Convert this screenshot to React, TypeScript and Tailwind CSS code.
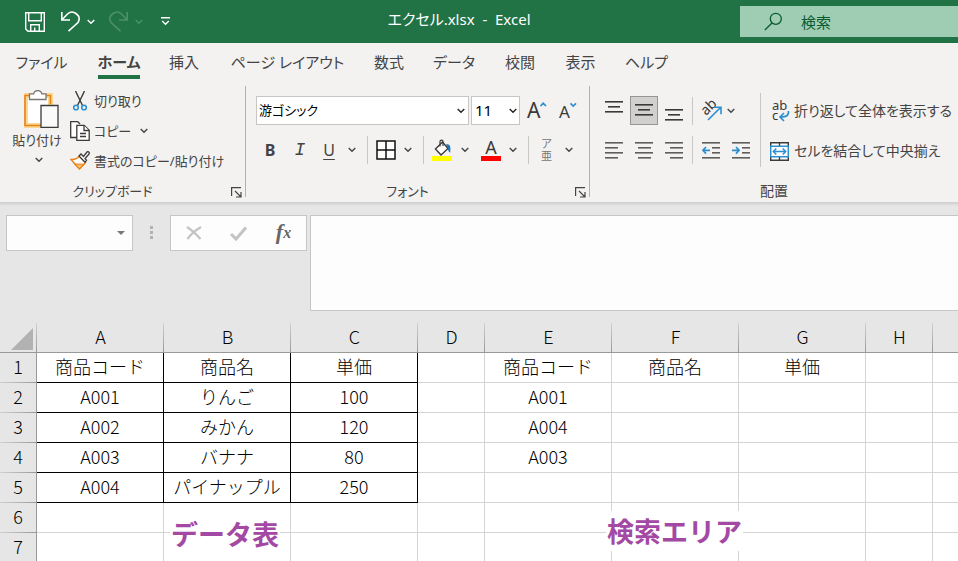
import React, { useState } from 'react';
import clsx from 'clsx';

const TABS = [
  { label: 'ファイル', width: 'w-[77px]' },
  { label: 'ホーム', width: 'w-[78px]' },
  { label: '挿入', width: 'w-[52px]' },
  { label: 'ページ レイアウト', width: 'w-[155px]' },
  { label: '数式', width: 'w-[48px]' },
  { label: 'データ', width: 'w-[82px]' },
  { label: '校閲', width: 'w-[50px]' },
  { label: '表示', width: 'w-[71px]' },
  { label: 'ヘルプ', width: 'w-[61px]' },
];

const COLUMNS = [
  { name: 'A', width: 'w-[127px]' },
  { name: 'B', width: 'w-[127px]' },
  { name: 'C', width: 'w-[127px]' },
  { name: 'D', width: 'w-[67px]' },
  { name: 'E', width: 'w-[127px]' },
  { name: 'F', width: 'w-[127px]' },
  { name: 'G', width: 'w-[127px]' },
  { name: 'H', width: 'w-[67px]' },
  { name: '', width: '' },
];

const ROWS = [
  ['商品コード', '商品名', '単価', '', '商品コード', '商品名', '単価', '', ''],
  ['A001', 'りんご', '100', '', 'A001', '', '', '', ''],
  ['A002', 'みかん', '120', '', 'A004', '', '', '', ''],
  ['A003', 'バナナ', '80', '', 'A003', '', '', '', ''],
  ['A004', 'パイナップル', '250', '', '', '', '', '', ''],
  ['', '', '', '', '', '', '', '', ''],
  ['', '', '', '', '', '', '', '', ''],
];

const Chevron: React.FC<{ className?: string }> = ({ className }) => (
  <svg width="8" height="6" viewBox="0 0 8 6" fill="none" stroke="currentColor" strokeWidth="1.4" className={className}>
    <path d="M.7 1 4 4.3 7.3 1" />
  </svg>
);

const Divider: React.FC = () => <div className="h-7 w-px shrink-0 bg-[#c8c6c4]" />;

const IconButton: React.FC<{
  label: string;
  className?: string;
  children: React.ReactNode;
}> = ({ label, className, children }) => (
  <button aria-label={label} title={label} className={clsx('flex shrink-0 items-center justify-center', className)}>
    {children}
  </button>
);

const Launcher: React.FC<{ label: string }> = ({ label }) => (
  <IconButton label={label} className="absolute right-[3px] top-[11px] h-[11px] w-[11px]">
    <svg width="11" height="11" viewBox="0 0 11 11" fill="none" stroke="#444" strokeWidth="1.2">
      <path d="M.6 9V.6H10M4 4l5.5 5.5M10 5v5H5" />
    </svg>
  </IconButton>
);

// lines are [x, y, width] on an 18px wide grid
const Lines: React.FC<{ lines: number[][]; height: number; color?: string; children?: React.ReactNode }> = ({
  lines,
  height,
  color = '#3b3a39',
  children,
}) => (
  <svg width="18" height={height} viewBox={`0 0 18 ${height}`} fill={color}>
    {lines.map(([x, y, w]) => (
      <rect key={`${x}-${y}`} x={x} y={y} width={w} height="1.6" />
    ))}
    {children}
  </svg>
);

const VERTICAL_LINES = [[0, 0, 18], [3, 5, 12], [0, 10, 18]];

const TitleBar: React.FC = () => (
  <header className="relative flex h-[43px] shrink-0 items-center justify-between bg-[#217346] text-white">
    <div className="flex items-center pl-[25px]">
      <IconButton label="上書き保存">
        <svg width="20" height="20" viewBox="0 0 20 20" fill="none" stroke="currentColor" strokeWidth="1.4">
          <path d="M.7.7h18.6v18.6H3L.7 17zM3.7.7v8h12.6v-8M5.7 19v-6.3h8.6V19M9.7 15.5V19" />
        </svg>
      </IconButton>
      <IconButton label="元に戻す" className="ml-4">
        <svg width="19" height="21" viewBox="0 0 19 21" fill="none" stroke="currentColor" strokeWidth="1.6">
          <path d="M.8 1v8H9M1.2 8.5 6.5 3C12-2 21 4.5 17 11.5L7.5 20.2" />
        </svg>
      </IconButton>
      <IconButton label="元に戻す履歴" className="ml-[7px]">
        <Chevron />
      </IconButton>
      <IconButton label="やり直し" className="ml-[14px] text-[#4d9069]">
        <svg width="19" height="21" viewBox="0 0 19 21" fill="none" stroke="currentColor" strokeWidth="1.6">
          <path d="M18.2 1v8H10M17.8 8.5 12.5 3C7-2-2 4.5 2 11.5l9.5 8.7" />
        </svg>
      </IconButton>
      <IconButton label="やり直し履歴" className="ml-[7px] text-[#4d9069]">
        <Chevron />
      </IconButton>
      <IconButton label="クイック アクセス ツール バーのユーザー設定" className="ml-[18px]">
        <svg width="9" height="9" viewBox="0 0 9 9" fill="none" stroke="currentColor" strokeWidth="1.4">
          <path d="M0 .8h9M1.2 4 4.5 7.3 7.8 4" />
        </svg>
      </IconButton>
    </div>
    <h1 className="absolute inset-x-0 top-[7px] mx-auto w-fit -translate-x-5 whitespace-pre text-[15px] leading-6 [font-feature-settings:'palt']">
      エクセル.xlsx  -  Excel
    </h1>
    <label className="flex h-[31px] w-[218px] items-center bg-[#9fcdb3] pl-6 text-[#0b5a2e]">
      <svg width="19" height="19" viewBox="0 0 19 19" fill="none" stroke="currentColor" strokeWidth="1.3" className="shrink-0">
        <circle cx="11.8" cy="6.8" r="5.5" />
        <path d="M8 11 .8 18" />
      </svg>
      <input
        type="text"
        aria-label="検索"
        placeholder="検索"
        className="ml-[18px] w-full min-w-0 bg-transparent text-[15px] leading-6 outline-none placeholder:text-[#0b5a2e]"
      />
    </label>
  </header>
);

const ClipboardGroup: React.FC = () => (
  <section className="w-[245px] shrink-0 text-[13px]">
    <div className="flex h-[90px]">
      <button className="flex w-[70px] shrink-0 flex-col items-center pl-1 pt-1">
        <svg width="35" height="38" viewBox="0 0 35 38" className="ml-2">
          <path d="M1.5 5.5h25v30h-25z" fill="#fff" stroke="#f8d98f" strokeWidth="5" />
          <path d="M10 5.5H1v30h16M18 5.5h8.5V14" fill="none" stroke="#e8821e" strokeWidth="1.6" />
          <path d="M5.5 9.5V3.8h4.2C10.5-.5 17-.5 17.8 3.8H22v5.7z" fill="#fff" stroke="#797774" strokeWidth="1.3" />
          <path d="M17 15.5h17v21.8H17z" fill="#fafafa" stroke="#3b3a39" strokeWidth="1.3" />
        </svg>
        <span className="mt-0.5 whitespace-nowrap leading-5">貼り付け</span>
        <Chevron className="ml-1 mt-[7px]" />
      </button>
      <div className="flex flex-col items-start whitespace-nowrap">
        <button className="flex h-[30px] items-center">
          <svg width="20" height="20" viewBox="0 0 20 20" fill="none" strokeWidth="1.4">
            <path d="M5.5 0 12.5 14.5M14.5 0 7.5 14.5" stroke="#3b3a39" />
            <circle cx="6" cy="16.5" r="2.3" stroke="#2e8fd0" strokeWidth="1.6" />
            <circle cx="14" cy="16.5" r="2.3" stroke="#2e8fd0" strokeWidth="1.6" />
          </svg>
          <span className="ml-1">切り取り</span>
        </button>
        <div className="flex h-[30px] items-center">
          <button className="flex items-center">
            <svg width="20" height="20" viewBox="0 0 20 20" fill="#fff" stroke="#3b3a39" strokeWidth="1.3">
              <path d="M6.5 16.5H.7V.7h7L10 3" />
              <path d="M6.8 4.3h7.4l5 5v10H6.8z" />
              <path d="M14 4.5v5h5M10 12.5h6M10 15.5h6" />
            </svg>
            <span className="ml-1">コピー</span>
          </button>
          <IconButton label="コピーのオプション" className="ml-[9px]">
            <Chevron />
          </IconButton>
        </div>
        <button className="flex h-[30px] items-center">
          <svg width="20" height="20" viewBox="0 0 20 20">
            <path d="M1 8.5 9.5 18l6-6.5L9.5 5C7 8 4 8.8 1 8.5z" fill="#fff" stroke="#e8821e" strokeWidth="1.4" />
            <path d="m4.5 13 9.5.2L9.500 18z" fill="#f8c46a" stroke="#e8821e" strokeWidth="1.2" />
            <path d="m9 5 2-2 2.5 2.5L17 1c1-1 3 .5 2 2l-4 4.5 1.5 1.7-1.5 2z" fill="#fff" stroke="#3b3a39" strokeWidth="1.3" />
          </svg>
          <span className="ml-1">書式のコピー/貼り付け</span>
        </button>
      </div>
    </div>
    <div className="relative flex h-[26px] justify-center pr-5 pt-[5px]">
      <span className="leading-5">クリップボード</span>
      <Launcher label="クリップボードの表示" />
    </div>
  </section>
);

const FontGroup: React.FC = () => {
  const [font, setFont] = useState('游ゴシック');
  const [size, setSize] = useState('11');

  return (
    <section className="w-[343px] shrink-0">
      <div className="flex h-[90px] flex-col gap-[11px] pl-[10px] pt-[10px]">
        <div className="flex h-[29px] items-center">
          <div className="relative h-full w-[213px] shrink-0">
            <select
              aria-label="フォント"
              value={font}
              onChange={(e) => setFont(e.target.value)}
              className="h-full w-full appearance-none border border-[#c8c6c4] bg-white pl-0.5 text-[13px] text-black"
            >
              <option>游ゴシック</option>
            </select>
            <Chevron className="pointer-events-none absolute right-1 top-3 text-[#252423]" />
          </div>
          <div className="relative ml-0.5 h-full w-[49px] shrink-0">
            <select
              aria-label="フォント サイズ"
              value={size}
              onChange={(e) => setSize(e.target.value)}
              className="h-full w-full appearance-none border border-[#c8c6c4] bg-white pl-[3px] text-[15px] text-black"
            >
              <option>11</option>
            </select>
            <Chevron className="pointer-events-none absolute right-[3px] top-3 text-[#252423]" />
          </div>
          <IconButton label="フォント サイズの拡大" className="ml-[7px]">
            <svg width="20" height="20" viewBox="0 0 20 20" className="overflow-visible">
              <text x="0" y="17" fontSize="21" fill="#3b3a39" fontFamily="Noto Sans">
                A
              </text>
              <path d="m13.5 5 2.7-2.700L19 5" fill="none" stroke="#2e8fd0" strokeWidth="1.7" />
            </svg>
          </IconButton>
          <IconButton label="フォント サイズの縮小" className="ml-3">
            <svg width="18" height="20" viewBox="0 0 18 20" className="overflow-visible">
              <text x="0" y="17" fontSize="17" fill="#3b3a39" fontFamily="Noto Sans">
                A
              </text>
              <path d="m11.5 2.3 2.7 2.700L17 2.300" fill="none" stroke="#2e8fd0" strokeWidth="1.7" />
            </svg>
          </IconButton>
        </div>
        <div className="flex h-7 items-center">
          <IconButton label="太字" className="w-7 font-['Noto_Sans'] text-base font-bold">
            B
          </IconButton>
          <IconButton label="斜体" className="w-8 font-['Liberation_Mono'] text-lg italic">
            I
          </IconButton>
          <IconButton label="下線" className="w-[26px] font-['Noto_Sans'] text-base underline underline-offset-3">
            U
          </IconButton>
          <IconButton label="下線の種類" className="w-5">
            <Chevron />
          </IconButton>
          <div className="w-[5px]" />
          <Divider />
          <IconButton label="罫線" className="ml-2">
            <svg width="20" height="20" viewBox="0 0 20 20" fill="#fff" stroke="#111" strokeWidth="1.5">
              <path d="M1 1h18v18H1zM10 1v18M1 10h18" />
            </svg>
          </IconButton>
          <IconButton label="罫線の種類" className="w-6">
            <Chevron />
          </IconButton>
          <div className="w-[3px]" />
          <Divider />
          <IconButton label="塗りつぶしの色" className="ml-2">
            <svg width="20" height="22" viewBox="0 0 20 22" fill="none">
              <path d="m3.5 10 7-7 5.5 6.500-7 6.500z" fill="#fff" stroke="#3b3a39" strokeWidth="1.4" />
              <path d="M8 7.5V2.500c0-1.800 3-1.800 3 0V7" stroke="#3b3a39" strokeWidth="1.2" />
              <path d="M14 5.500c4-1 5 2 4.200 8-2.500-.500-1.500-4-4.200-8z" fill="#1e72b8" />
              <path d="M0 17h20v5H0z" fill="#ff0" />
            </svg>
          </IconButton>
          <IconButton label="塗りつぶしの色の選択" className="w-[25px]">
            <Chevron />
          </IconButton>
          <IconButton label="フォントの色" className="ml-1">
            <svg width="20" height="22" viewBox="0 0 20 22" className="overflow-visible">
              <text x="10" y="15" textAnchor="middle" fontSize="18" fill="#3b3a39" fontFamily="Noto Sans">
                A
              </text>
              <path d="M0 17h20v5H0z" fill="red" />
            </svg>
          </IconButton>
          <IconButton label="フォントの色の選択" className="w-6">
            <Chevron />
          </IconButton>
          <div className="w-[3px]" />
          <Divider />
          <IconButton label="ふりがなの表示" className="ml-3 flex-col text-[11px] leading-[12px] text-[#797774]">
            <span>ア</span>
            <span>亜</span>
          </IconButton>
          <IconButton label="ふりがなの設定" className="ml-1 w-[25px]">
            <Chevron />
          </IconButton>
        </div>
      </div>
      <div className="relative flex h-[26px] justify-center pr-5 pt-[5px] text-[13px]">
        <span className="leading-5">フォント</span>
        <Launcher label="フォントの設定" />
      </div>
    </section>
  );
};

const AlignmentGroup: React.FC = () => (
  <section className="min-w-0 flex-1">
    <div className="flex h-[90px] pl-[9px]">
      <div className="flex shrink-0 flex-col gap-[11px] pt-[10px]">
        <div className="flex h-[29px] items-center">
          <IconButton label="上揃え" className="h-full w-[30px] pb-2">
            <Lines lines={VERTICAL_LINES} height={12} />
          </IconButton>
          <IconButton label="上下中央揃え" className="mx-px h-full w-7 border border-[#979593] bg-[#d2d0ce] pb-0.5">
            <Lines lines={VERTICAL_LINES} height={12} />
          </IconButton>
          <IconButton label="下揃え" className="h-full w-[30px] pt-2">
            <Lines lines={VERTICAL_LINES} height={12} />
          </IconButton>
          <div className="w-[3px]" />
          <Divider />
          <IconButton label="方向" className="ml-2">
            <svg width="22" height="22" viewBox="0 0 22 22" fill="none" className="overflow-visible">
              <text x="5" y="16" transform="rotate(-45 5 16)" fontSize="14" fill="#3b3a39" fontFamily="Noto Sans">
                ab
              </text>
              <path d="M7 20 19.5 7.500M13 7.200h7v7" stroke="#2e8fd0" strokeWidth="1.6" />
            </svg>
          </IconButton>
          <IconButton label="方向の種類" className="w-4">
            <Chevron />
          </IconButton>
        </div>
        <div className="flex h-7 items-center">
          <IconButton label="左揃え" className="w-[30px]">
            <Lines lines={[[0, 0, 18], [0, 5, 13], [0, 10, 18], [0, 15, 13]]} height={17} color="#605e5c" />
          </IconButton>
          <IconButton label="中央揃え" className="w-[30px]">
            <Lines lines={[[0, 0, 18], [3, 5, 13], [0, 10, 18], [3, 15, 13]]} height={17} color="#605e5c" />
          </IconButton>
          <IconButton label="右揃え" className="w-[30px]">
            <Lines lines={[[0, 0, 18], [5, 5, 13], [0, 10, 18], [5, 15, 13]]} height={17} color="#605e5c" />
          </IconButton>
          <div className="w-[3px]" />
          <Divider />
          <IconButton label="インデントを減らす" className="ml-[3px] w-[30px]">
            <Lines lines={[[0, 0, 18], [10, 5, 8], [10, 10, 8], [0, 15, 18]]} height={17} color="#605e5c">
              <path d="M8 8.300H1M4 5 .9 8.300 4 11.600" fill="none" stroke="#2e8fd0" strokeWidth="1.7" />
            </Lines>
          </IconButton>
          <IconButton label="インデントを増やす" className="w-[30px]">
            <Lines lines={[[0, 0, 18], [10, 5, 8], [10, 10, 8], [0, 15, 18]]} height={17} color="#605e5c">
              <path d="M0 8.300h7M4 5l3.100 3.300L4 11.600" fill="none" stroke="#2e8fd0" strokeWidth="1.7" />
            </Lines>
          </IconButton>
        </div>
      </div>
      <div className="ml-[4px] mt-[7px] h-[74px] w-px shrink-0 bg-[#c8c6c4]" />
      <div className="flex flex-col gap-[10px] whitespace-nowrap pl-[9px] pt-[10px]">
        <button className="flex h-[30px] items-center">
          <svg width="20" height="22" viewBox="0 0 20 22" fill="none" className="overflow-visible">
            <text x="2" y="10" fontSize="13" fill="#3b3a39" fontFamily="Noto Sans">
              ab
            </text>
            <text x="2" y="20" fontSize="13" fill="#3b3a39" fontFamily="Noto Sans">
              c
            </text>
            <path d="M18.5 11c.500 4-1.500 6-8 6M14 13l-4 4 4 4" stroke="#2e8fd0" strokeWidth="1.7" />
          </svg>
          <span className="ml-1">折り返して全体を表示する</span>
        </button>
        <button className="flex h-[30px] items-center">
          <svg width="19" height="19" viewBox="0 0 19 19" fill="#fff">
            <path d="M.7.7h17.600v17.600H.7zM9.500.7v4M9.500 14.500v4" stroke="#3b3a39" strokeWidth="1.4" />
            <path d="M.7 4.300h17.600v10.400H.7z" stroke="#2e8fd0" strokeWidth="1.5" />
            <path d="M3.500 9.500h12M6.300 6.500l-3 3 3 3M12.700 6.500l3 3-3 3" fill="none" stroke="#2e8fd0" strokeWidth="1.5" />
          </svg>
          <span className="ml-[5px]">セルを結合して中央揃え</span>
        </button>
      </div>
    </div>
    <div className="flex h-[26px] justify-center pt-[5px]">
      <span className="leading-5">配置</span>
    </div>
  </section>
);

const Ribbon: React.FC = () => {
  const [active, setActive] = useState('ホーム');

  return (
    <div className="shrink-0 bg-[#f3f2f1] text-[#444] [font-feature-settings:'palt']">
      <nav className="flex h-[43px] pl-[3px]">
        {TABS.map((tab) => (
          <button
            key={tab.label}
            onClick={() => setActive(tab.label)}
            className={clsx('flex shrink-0 justify-center whitespace-nowrap pt-[7px] text-[15px] leading-6', tab.width)}
          >
            <span
              className={clsx(
                'h-[29px] border-b-4',
                active === tab.label ? 'border-[#217346] font-bold' : 'border-transparent'
              )}
            >
              {tab.label}
            </span>
          </button>
        ))}
      </nav>
      <div className="flex h-[116px] text-sm">
        <ClipboardGroup />
        <div className="h-[111px] w-px shrink-0 bg-[#b3b0ad]" />
        <FontGroup />
        <div className="h-[111px] w-px shrink-0 bg-[#b3b0ad]" />
        <AlignmentGroup />
      </div>
    </div>
  );
};

const FormulaBar: React.FC = () => (
  <div className="flex shrink-0 items-start bg-[#e6e6e6] pb-3 pl-[6px] pt-[9px]">
    <div className="flex h-9 w-[127px] shrink-0 items-center border border-[#c6c6c6] bg-[#fdfdfd]">
      <input type="text" aria-label="名前ボックス" className="h-full w-full min-w-0 px-2 outline-none" />
      <IconButton label="名前の一覧" className="w-5 pr-0.5">
        <svg width="8" height="4" viewBox="0 0 8 4" fill="#777">
          <path d="M0 0h8L4 4z" />
        </svg>
      </IconButton>
    </div>
    <div className="ml-[17px] mt-[11px] flex w-[3px] flex-col gap-0.5">
      <div className="h-[3px] bg-[#b1b1b1]" />
      <div className="h-[3px] bg-[#b1b1b1]" />
      <div className="h-[3px] bg-[#b1b1b1]" />
    </div>
    <div className="ml-[17px] flex h-9 w-[137px] shrink-0 items-center border border-[#c6c6c6] bg-[#fdfdfd]">
      <IconButton label="キャンセル" className="h-full w-[45px]">
        <svg width="16" height="14" viewBox="0 0 16 14" fill="none" stroke="#c3c3c3" strokeWidth="2.2">
          <path d="M1 1c5 3 9 7 13.500 12M15 1C10 4 5 8 1.500 13" />
        </svg>
      </IconButton>
      <IconButton label="入力" className="h-full w-[45px]">
        <svg width="17" height="15" viewBox="0 0 17 15" fill="none" stroke="#c3c3c3" strokeWidth="3">
          <path d="m1 8 5 5L16 1.500" />
        </svg>
      </IconButton>
      <IconButton
        label="関数の挿入"
        className="h-full w-[45px] pb-1 font-['Liberation_Serif'] text-[22px] italic text-[#666]"
      >
        <b>f</b>
        <b className="pt-1 text-base">x</b>
      </IconButton>
    </div>
    <textarea
      aria-label="数式バー"
      className="ml-[3px] h-24 min-w-0 flex-1 resize-none border border-r-0 border-[#c6c6c6] bg-[#fdfdfd] p-2 outline-none"
    />
  </div>
);

const Sheet: React.FC = () => (
  <main className="relative min-h-0 flex-1 overflow-hidden bg-white">
    <table className="w-full table-fixed border-separate border-spacing-0 text-center text-lg font-light leading-6 text-black">
      <colgroup>
        <col className="w-[37px]" />
        {COLUMNS.map((col) => (
          <col key={col.name} className={col.width} />
        ))}
      </colgroup>
      <thead>
        <tr className="h-[30px] bg-[#e6e6e6]">
          <td className="border-b border-[#999] bg-[linear-gradient(#d0d0d0,#999)] bg-[length:1px_100%] bg-right bg-no-repeat p-0">
            <svg width="22" height="22" viewBox="0 0 22 22" fill="#b2b2b2" className="ml-[11px] mt-0.5">
              <path d="M22 0v22H0z" />
            </svg>
          </td>
          {COLUMNS.map((col) => (
            <th
              key={col.name}
              scope="col"
              className="border-b border-[#999] bg-[linear-gradient(#d0d0d0,#999)] bg-[length:1px_100%] bg-right bg-no-repeat p-0 pb-1 font-light last:bg-none"
            >
              {col.name}
            </th>
          ))}
        </tr>
      </thead>
      <tbody>
        {ROWS.map((row, r) => (
          <tr key={r} className="h-[30px]">
            <th
              scope="row"
              className="border-r border-[#999] bg-[#e6e6e6] bg-[linear-gradient(to_right,#d0d0d0,#999)] bg-[length:100%_1px] bg-bottom bg-no-repeat p-0 pb-1 font-light"
            >
              {r + 1}
            </th>
            {row.map((value, c) => (
              <td
                key={c}
                className={clsx(
                  'border-b border-r p-0 pb-1 last:border-r-0',
                  r < 5 && c < 3 ? 'border-black' : 'border-[#d4d4d4]'
                )}
              >
                {value}
              </td>
            ))}
          </tr>
        ))}
      </tbody>
    </table>

    {/* text boxes floating over the cells */}
    <div className="absolute left-[170px] top-[191px] bg-white px-px text-[27px] font-bold leading-10 text-[#a349a4]">
      データ表
    </div>
    <div className="absolute left-[606px] top-[188px] bg-white px-px text-[27px] font-bold leading-10 text-[#a349a4]">
      検索エリア
    </div>
  </main>
);

export default function App() {
  return (
    <div className="flex h-screen flex-col overflow-hidden bg-[#e6e6e6] font-['Noto_Sans','Noto_Sans_CJK_JP',sans-serif]">
      <TitleBar />
      <Ribbon />
      <div className="h-1 shrink-0 bg-linear-to-b from-[#cdcdcd] to-[#e6e6e6]" />
      <FormulaBar />
      <div className="flex min-h-0 flex-1 flex-col font-['Noto_Sans_CJK_JP',sans-serif]">
        <Sheet />
      </div>
    </div>
  );
}
